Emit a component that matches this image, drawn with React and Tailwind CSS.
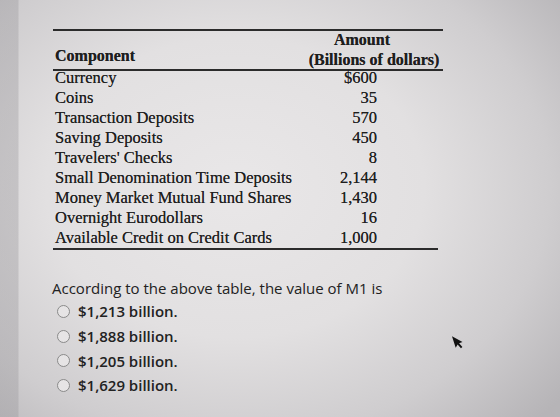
export default function App() {
  const rows = [
    ["Currency", "$600"],
    ["Coins", "35"],
    ["Transaction Deposits", "570"],
    ["Saving Deposits", "450"],
    ["Travelers' Checks", "8"],
    ["Small Denomination Time Deposits", "2,144"],
    ["Money Market Mutual Fund Shares", "1,430"],
    ["Overnight Eurodollars", "16"],
    ["Available Credit on Credit Cards", "1,000"],
  ];
  const options = ["$1,213 billion.", "$1,888 billion.", "$1,205 billion.", "$1,629 billion."];
  return (
    <div className="relative w-[560px] h-[417px] overflow-hidden bg-[linear-gradient(90deg,rgba(150,148,152,0.35)_0px,rgba(150,148,152,0.35)_18px,rgba(0,0,0,0)_19px),radial-gradient(ellipse_75%_80%_at_42%_45%,#e9e7e8_0%,#e2e0e1_45%,#cfcdcf_75%,#b6b4b7_100%)] pt-[29px]">
      <div className="ml-[53px] w-[390px] border-t-2 border-[#2b2b2b] font-['Liberation_Serif',serif] text-[#1e1e1e] [text-shadow:0_0_0.6px_rgba(0,0,0,0.7)]">
        <div className="flex h-[40px] border-b-2 border-[#2b2b2b] text-[16px] font-bold leading-[19px]">
          <div className="flex-1 flex items-end pb-[4px] pl-[2px]">Component</div>
          <div className="w-[136px] flex flex-col items-center justify-between pr-[2px]">
            <div className="-ml-[24px] -mt-[1px]">Amount</div>
            <div>(Billions of dollars)</div>
          </div>
        </div>
        <div className="-mt-[3px] text-[16.5px] leading-[20px]">
          {rows.map(([name, val]) => (
            <div key={name} className="flex h-[20px]">
              <div className="flex-1 pl-[2px]">{name}</div>
              <div className="pr-[66px] text-right">{val}</div>
            </div>
          ))}
        </div>
        <div className="w-[385px] border-t-2 border-[#2b2b2b]" />
      </div>

      <div className="mt-[28px] ml-[52px] font-['Open_Sans',sans-serif] text-[#222]">
        <div className="text-[15px] leading-[20px]">According to the above table, the value of M1 is</div>
        <div className="mt-[1px] flex flex-col">
          {options.map((o) => (
            <div key={o} className="flex h-[24.7px] items-center">
              <div className="ml-[5px] h-[13px] w-[13px] rounded-full border border-[#8a8a8a] bg-[#e6e4e5]" />
              <div className="ml-[8px] text-[15px] font-semibold leading-[20px]">{o}</div>
            </div>
          ))}
        </div>
      </div>

      <svg className="absolute left-[451px] top-[334px]" width="13" height="17" viewBox="0 0 13 17">
        <path d="M3 1 L3 13 L5.8 10.6 L7.8 15.2 L9.6 14.4 L7.6 9.9 L11.2 9.8 Z" fill="#111" transform="rotate(-18 6 8)" />
      </svg>
    </div>
  );
}
